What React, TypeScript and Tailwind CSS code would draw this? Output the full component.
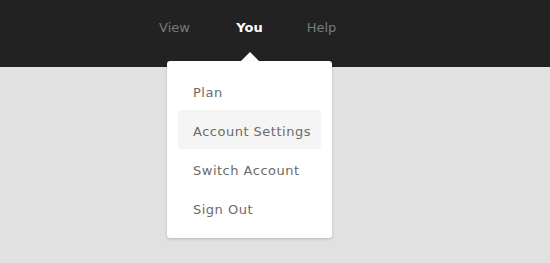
const navItems = [
  { label: 'View', width: 'w-[75px]', active: false },
  { label: 'You', width: 'w-[75px]', active: true },
  { label: 'Help', width: 'w-[69px]', active: false },
];

const menuItems = ['Plan', 'Account Settings', 'Switch Account', 'Sign Out'];

export default function App() {
  const hovered = 'Account Settings';

  return (
    <div className="relative h-[263px] w-full overflow-hidden bg-[#e1e1e1] font-['DejaVu_Sans',sans-serif] text-[13px]">
      <header className="h-[67px] bg-[#222222]">
        <nav className="flex pl-[137px] pt-[18px] leading-[20px]">
          {navItems.map((item) => (
            <a
              key={item.label}
              className={`${item.width} text-center ${
                item.active ? 'font-bold text-white' : 'text-[#7a7a7a]'
              }`}
            >
              {item.label}
            </a>
          ))}
        </nav>
      </header>

      {/* caret under the active tab */}
      <div className="absolute left-[241px] top-[52px] h-0 w-0 border-x-[9px] border-b-[9px] border-x-transparent border-b-white" />

      <div className="absolute left-[167px] top-[61px] w-[165px] rounded-[3px] bg-white px-[11px] pt-[10px] pb-[11px] shadow-[0_1px_3px_rgba(0,0,0,0.18)]">
        {menuItems.map((label) => (
          <div
            key={label}
            className={`h-[39px] rounded-[3px] pl-[15px] pt-[4px] leading-[35px] tracking-[0.5px] text-[#6b6b6b] ${
              label === hovered ? 'bg-[#f5f5f5]' : ''
            }`}
          >
            {label}
          </div>
        ))}
      </div>
    </div>
  );
}
